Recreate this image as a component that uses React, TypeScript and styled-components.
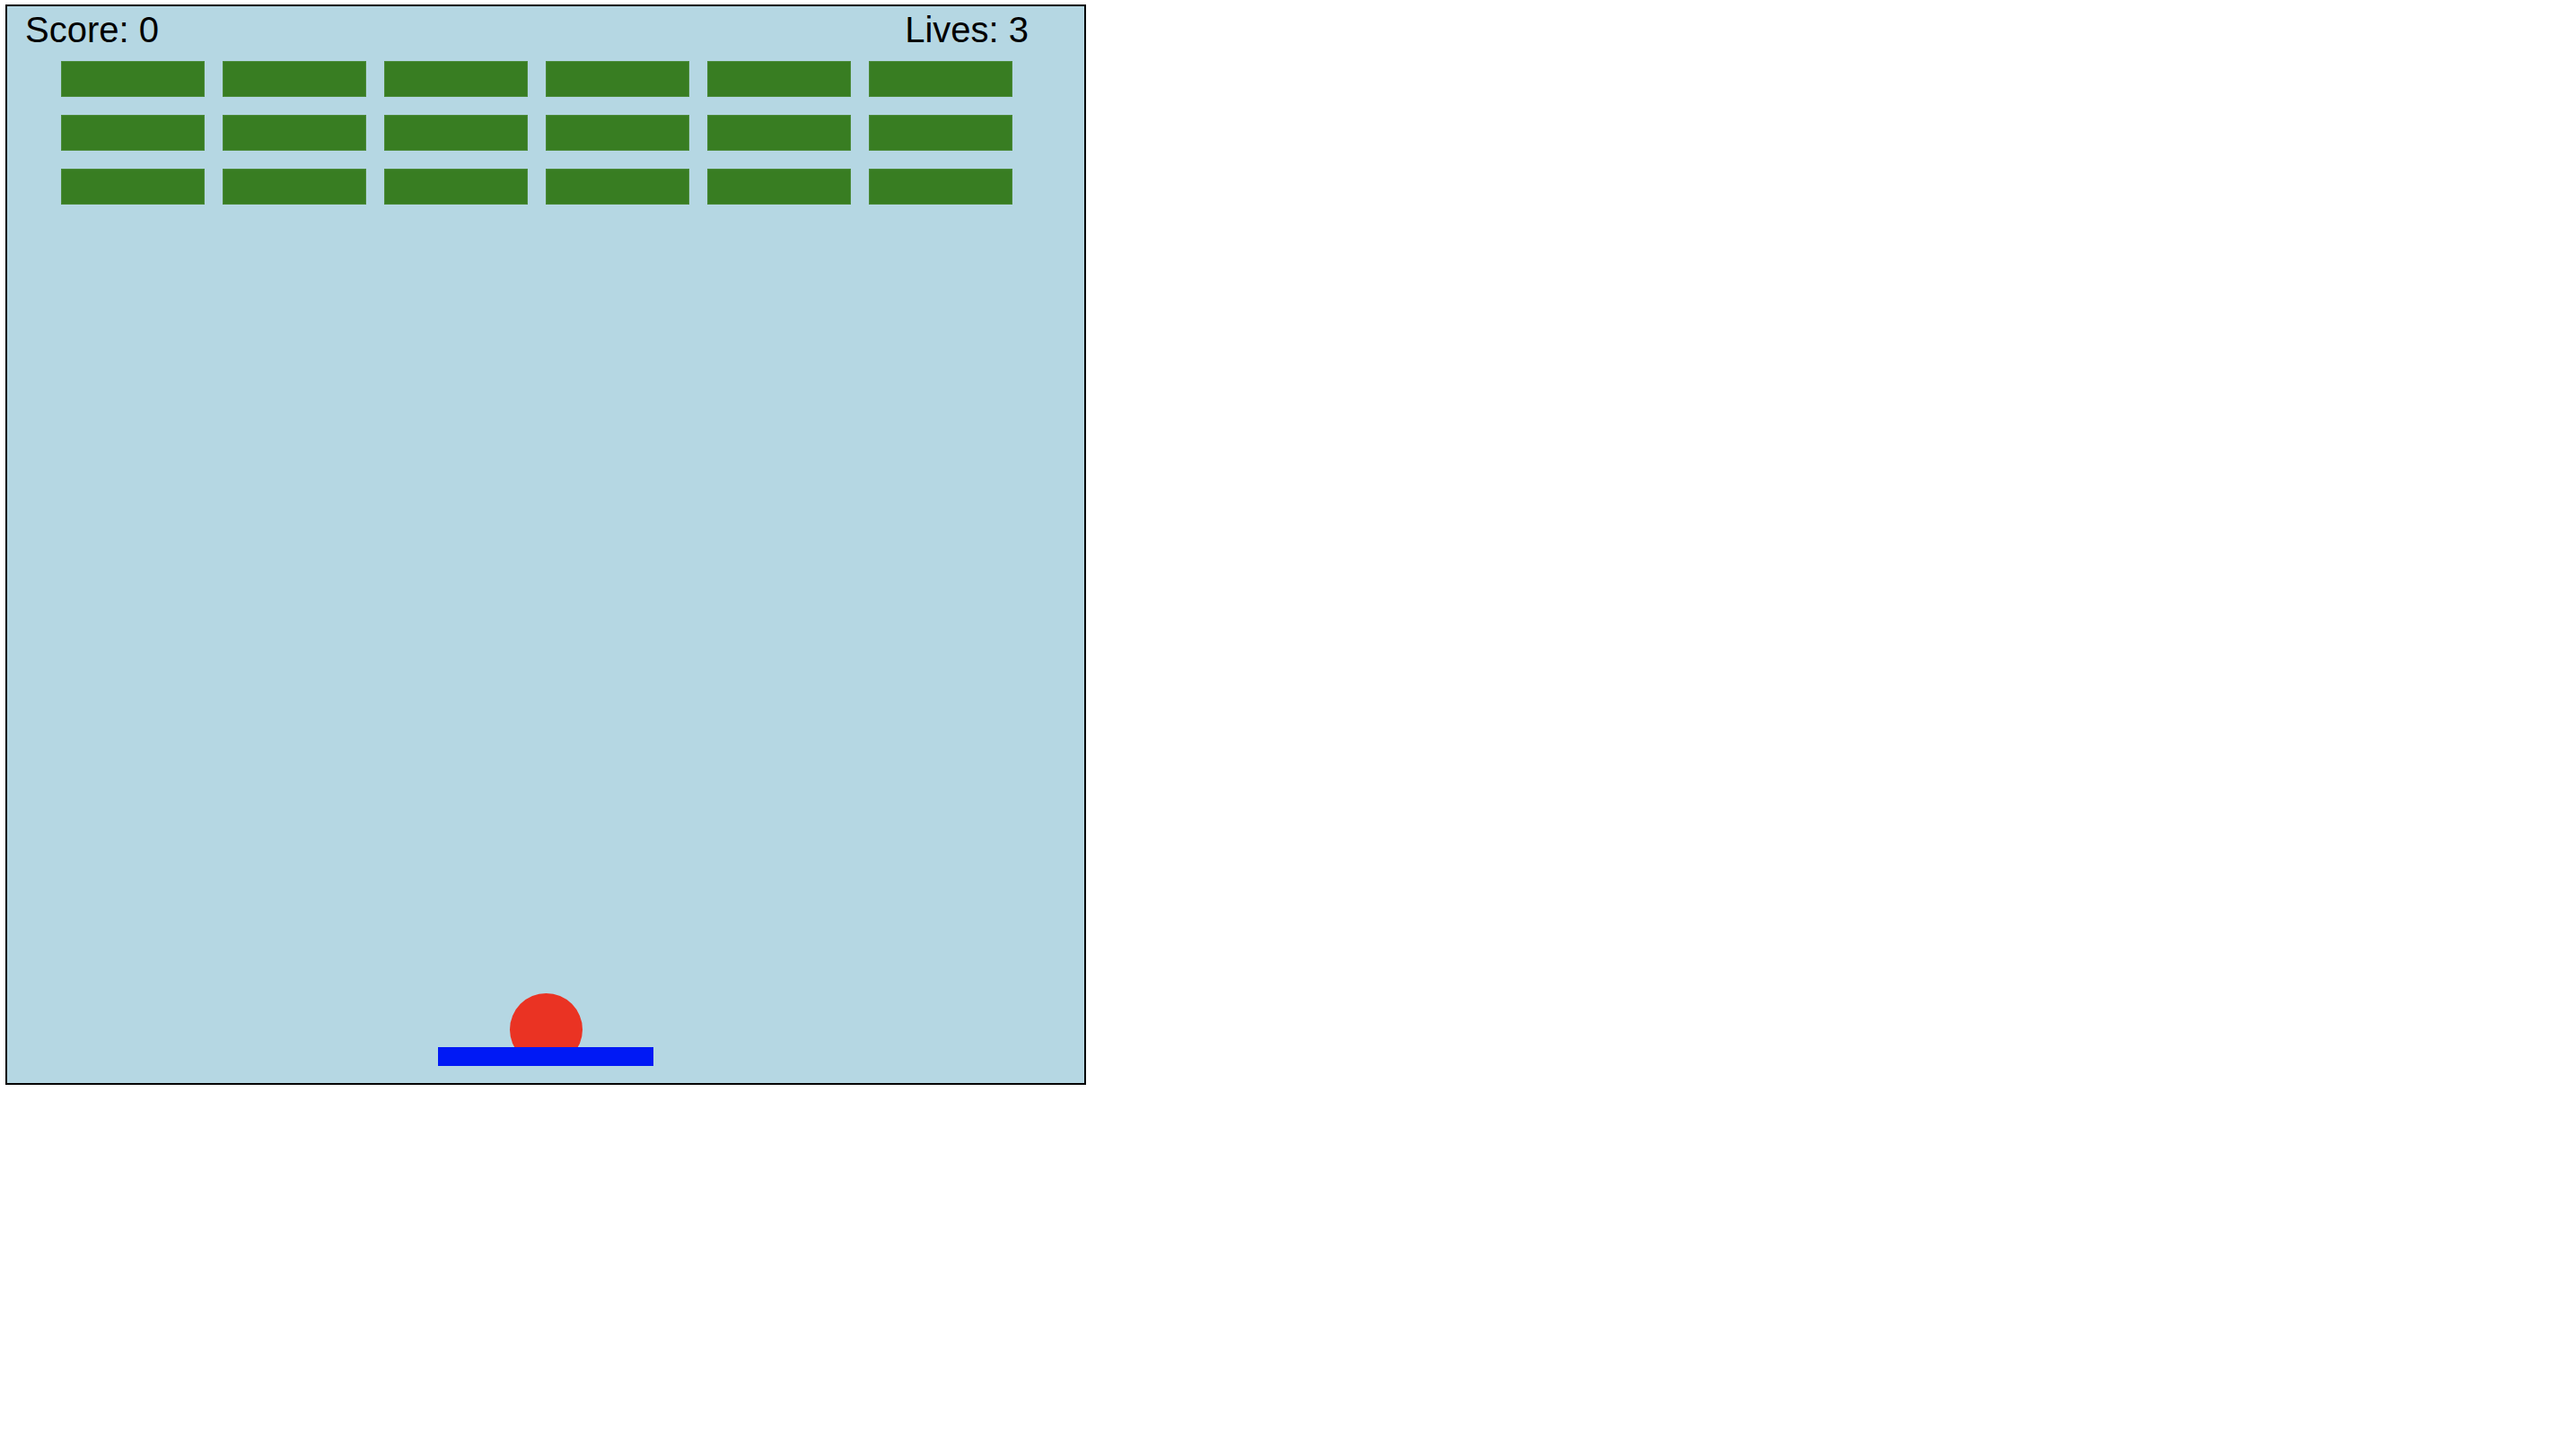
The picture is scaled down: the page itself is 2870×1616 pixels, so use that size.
import styled, { createGlobalStyle } from "styled-components";

const GlobalStyle = createGlobalStyle`
  body {
    margin: 0;
    background: #fff;
    font-family: "Liberation Sans", Arial, sans-serif;
  }
`;

const Board = styled.div`
  position: relative;
  box-sizing: content-box;
  width: 1200px;
  height: 1200px;
  margin: 5px 0 0 6px;
  border: 2px solid #000;
  background-color: #b5d7e3;
  overflow: hidden;
`;

const Hud = styled.div`
  display: flex;
  justify-content: space-between;
  padding: 6px 62px 0 20px;
  font-size: 40px;
  line-height: 40px;
  color: #000;
  white-space: nowrap;
`;

const BrickGrid = styled.div`
  display: grid;
  grid-template-columns: repeat(6, 160px);
  grid-auto-rows: 40px;
  gap: 20px;
  margin: 15px 0 0 60px;
`;

const Brick = styled.div`
  background-color: #387d22;
  box-shadow: inset 0 0 0 1px #4b8a39;
`;

interface PieceProps {
  $x: number;
  $y: number;
}

const Ball = styled.div<PieceProps>`
  position: absolute;
  left: ${({ $x }) => $x - 40}px;
  top: ${({ $y }) => $y - 40}px;
  width: 81px;
  height: 81px;
  border-radius: 50%;
  background-color: #ea3323;
`;

const Paddle = styled.div<PieceProps>`
  position: absolute;
  left: ${({ $x }) => $x - 120}px;
  top: ${({ $y }) => $y}px;
  width: 240px;
  height: 21px;
  background-color: #0019f5;
`;

const ROWS = 3;
const COLS = 6;

export default function App() {
  const score = 0;
  const lives = 3;
  const bricks = Array.from({ length: ROWS * COLS }, (_, i) => i);

  return (
    <>
      <GlobalStyle />
      <Board>
        <Hud>
          <span>Score: {score}</span>
          <span>Lives: {lives}</span>
        </Hud>
        <BrickGrid>
          {bricks.map((i) => (
            <Brick key={i} />
          ))}
        </BrickGrid>
        <Ball $x={600} $y={1140} />
        <Paddle $x={600} $y={1160} />
      </Board>
    </>
  );
}
